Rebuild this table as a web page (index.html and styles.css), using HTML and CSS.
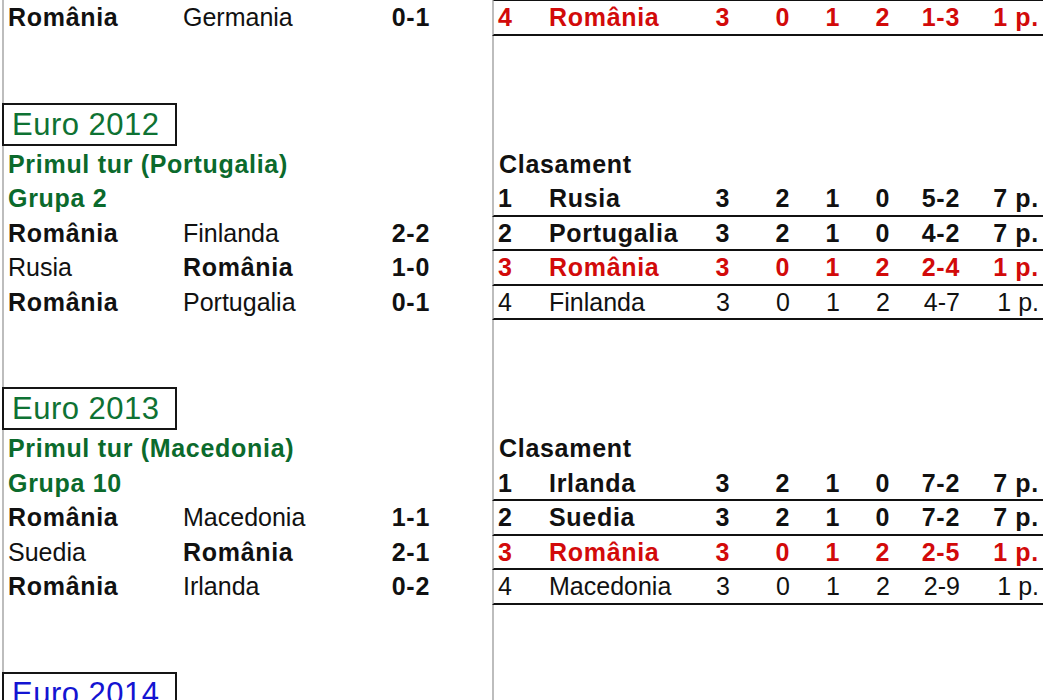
FILE: index.html
```html
<!DOCTYPE html>
<html lang="ro">
<head>
<meta charset="utf-8">
<title>Euro - România</title>
<link rel="stylesheet" href="styles.css">
</head>
<body>
<div class="sheet">
  <div class="row first">
    <div class="cl match"><span class="b">România</span><span>Germania</span><span class="score b">0-1</span></div>
    <div class="cr trow red b top"><span class="pos">4</span><span>România</span><span class="n">3</span><span class="n">0</span><span class="n">1</span><span class="n">2</span><span class="n">1-3</span><span class="n last">1 p.</span></div>
  </div>
  <div class="row"><div class="cl"></div><div class="cr"></div></div>
  <div class="row"><div class="cl"></div><div class="cr"></div></div>

  <div class="row title"><div class="cl"><div class="euro green">Euro 2012</div></div><div class="cr"></div></div>
  <div class="row"><div class="cl sub b">Primul tur (Portugalia)</div><div class="cr"><span class="clas b">Clasament</span></div></div>
  <div class="row">
    <div class="cl sub b">Grupa 2</div>
    <div class="cr trow b"><span class="pos">1</span><span>Rusia</span><span class="n">3</span><span class="n">2</span><span class="n">1</span><span class="n">0</span><span class="n">5-2</span><span class="n last">7 p.</span></div>
  </div>
  <div class="row">
    <div class="cl match"><span class="b">România</span><span>Finlanda</span><span class="score b">2-2</span></div>
    <div class="cr trow b"><span class="pos">2</span><span>Portugalia</span><span class="n">3</span><span class="n">2</span><span class="n">1</span><span class="n">0</span><span class="n">4-2</span><span class="n last">7 p.</span></div>
  </div>
  <div class="row">
    <div class="cl match"><span>Rusia</span><span class="b">România</span><span class="score b">1-0</span></div>
    <div class="cr trow red b"><span class="pos">3</span><span>România</span><span class="n">3</span><span class="n">0</span><span class="n">1</span><span class="n">2</span><span class="n">2-4</span><span class="n last">1 p.</span></div>
  </div>
  <div class="row">
    <div class="cl match"><span class="b">România</span><span>Portugalia</span><span class="score b">0-1</span></div>
    <div class="cr trow"><span class="pos">4</span><span>Finlanda</span><span class="n">3</span><span class="n">0</span><span class="n">1</span><span class="n">2</span><span class="n">4-7</span><span class="n last">1 p.</span></div>
  </div>
  <div class="row"><div class="cl"></div><div class="cr"></div></div>
  <div class="row"><div class="cl"></div><div class="cr"></div></div>

  <div class="row title"><div class="cl"><div class="euro green">Euro 2013</div></div><div class="cr"></div></div>
  <div class="row"><div class="cl sub b">Primul tur (Macedonia)</div><div class="cr"><span class="clas b">Clasament</span></div></div>
  <div class="row">
    <div class="cl sub b">Grupa 10</div>
    <div class="cr trow b"><span class="pos">1</span><span>Irlanda</span><span class="n">3</span><span class="n">2</span><span class="n">1</span><span class="n">0</span><span class="n">7-2</span><span class="n last">7 p.</span></div>
  </div>
  <div class="row">
    <div class="cl match"><span class="b">România</span><span>Macedonia</span><span class="score b">1-1</span></div>
    <div class="cr trow b"><span class="pos">2</span><span>Suedia</span><span class="n">3</span><span class="n">2</span><span class="n">1</span><span class="n">0</span><span class="n">7-2</span><span class="n last">7 p.</span></div>
  </div>
  <div class="row">
    <div class="cl match"><span>Suedia</span><span class="b">România</span><span class="score b">2-1</span></div>
    <div class="cr trow red b"><span class="pos">3</span><span>România</span><span class="n">3</span><span class="n">0</span><span class="n">1</span><span class="n">2</span><span class="n">2-5</span><span class="n last">1 p.</span></div>
  </div>
  <div class="row">
    <div class="cl match"><span class="b">România</span><span>Irlanda</span><span class="score b">0-2</span></div>
    <div class="cr trow"><span class="pos">4</span><span>Macedonia</span><span class="n">3</span><span class="n">0</span><span class="n">1</span><span class="n">2</span><span class="n">2-9</span><span class="n last">1 p.</span></div>
  </div>
  <div class="row"><div class="cl"></div><div class="cr"></div></div>
  <div class="row"><div class="cl"></div><div class="cr"></div></div>

  <div class="row title"><div class="cl"><div class="euro blue">Euro 2014</div></div><div class="cr"></div></div>
  <div class="row"><div class="cl"></div><div class="cr"></div></div>
</div>
</body>
</html>
```

FILE: styles.css
```css
html, body {
  margin: 0;
  padding: 0;
  background: #ffffff;
  overflow: hidden;
}

body {
  font-family: "Liberation Sans", Arial, sans-serif;
  font-size: 25px;
  color: #111111;
}

.sheet {
  margin: -1px 0 0 2px;
  border-left: 2px solid #bdbdbd;
  height: 760px;
}

.row {
  display: grid;
  grid-template-columns: 488px 551px;
  height: 34.5px;
}

.row.first {
  height: 36.5px;
}

.row.title {
  height: 43px;
}

.cl {
  padding-left: 4px;
  line-height: 32.5px;
  white-space: nowrap;
}

.row.first .cl {
  padding-top: 2px;
}

.cr {
  border-left: 2px solid #bdbdbd;
  line-height: 32.5px;
  white-space: nowrap;
}

.b {
  font-weight: bold;
  letter-spacing: 0.7px;
}

.match {
  display: grid;
  grid-template-columns: 175px 200px 52px;
}

.score {
  text-align: right;
  padding-right: 5px;
}

.sub {
  color: #0b6a2c;
}

.euro {
  margin: -2px 0 0 -6px;
  width: 175px;
  height: 43px;
  box-sizing: border-box;
  border: 2px solid #151515;
  padding-left: 8px;
  font-size: 31px;
  line-height: 39px;
  letter-spacing: 0.5px;
}

.green {
  color: #0e7233;
}

.blue {
  color: #1414d2;
}

.clas {
  padding-left: 5px;
}

.trow {
  display: grid;
  grid-template-columns: 55px 150px 33px 60px 50px 50px 70px 81px;
  border-bottom: 2px solid #111111;
}

.trow.top {
  border-top: 2px solid #111111;
}

.trow .pos {
  padding-left: 4px;
}

.trow .n {
  text-align: right;
  padding-right: 2px;
}

.trow .n.last {
  padding-right: 4px;
}

.red {
  color: #d20a0a;
}
```
